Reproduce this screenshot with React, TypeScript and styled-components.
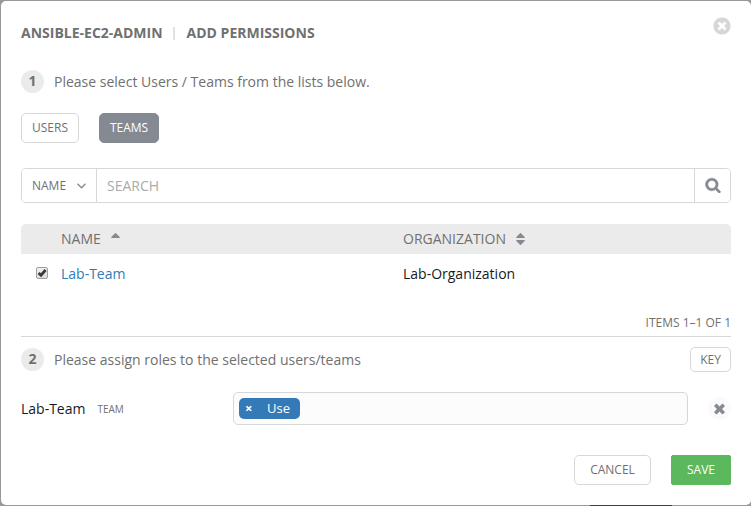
import React from "react";
import styled, { createGlobalStyle } from "styled-components";

const GlobalStyle = createGlobalStyle`
  *, *::before, *::after { box-sizing: border-box; }
  html, body { margin: 0; padding: 0; overflow: hidden; }
  body { background: #999; font-family: "Open Sans", sans-serif; font-size: 14px; line-height: 20px; color: #161b1f; }
  button, input { font-family: inherit; margin: 0; }
`;

const Backdrop = styled.div`
  width: 751px;
  height: 506px;
  padding: 1px 0 1px 1px;
  background: linear-gradient(#184a71, #184a71) 590px 505px / 82px 1px no-repeat #999;
`;

const Dialog = styled.section`
  height: 504px;
  padding: 0 20px;
  background: #fff;
  border-radius: 5px;
  display: flex;
  flex-direction: column;
`;

const Header = styled.header`
  display: flex;
  justify-content: space-between;
  height: 69px;
`;

const Title = styled.h1`
  display: flex;
  align-items: center;
  height: 20px;
  margin: 22px 0 0;
  font-size: 14px;
  font-weight: 700;
  color: #707070;
  white-space: nowrap;
`;

const TitleDivider = styled.span`
  width: 2px;
  height: 13px;
  margin: 0 12px 0 10px;
  background: #e2e2e2;
`;

const CloseButton = styled.button`
  display: flex;
  width: 20px;
  height: 20px;
  margin: 15px -1px 0 0;
  padding: 0;
  border: 0;
  background: none;
  color: #d7d7d7;
`;

const StepRow = styled.div<{ $height: number }>`
  display: flex;
  align-items: center;
  height: ${(p) => p.$height}px;
  color: #707070;
`;

const StepNumber = styled.span`
  width: 23px;
  height: 23px;
  margin-right: 10px;
  border-radius: 50%;
  background: #ebebeb;
  font-weight: 700;
  line-height: 22px;
  text-align: center;
`;

const StepText = styled.span`
  flex: 1;
  padding-top: 1px;
`;

const Button = styled.button<{ $width: number; $height?: number; $tone?: "active" | "success" }>`
  width: ${(p) => p.$width}px;
  height: ${(p) => p.$height ?? 30}px;
  padding: 0 0 1px;
  border: 1px solid
    ${(p) => (p.$tone === "active" ? "#848992" : p.$tone === "success" ? "#5cb85c" : "#d7d7d7")};
  border-radius: ${(p) => (p.$tone === "success" ? 2 : 5)}px;
  background: ${(p) => (p.$tone === "active" ? "#848992" : p.$tone === "success" ? "#5cb85c" : "#fff")};
  color: ${(p) => (p.$tone ? "#fff" : "#707070")};
  font-size: 12px;
  line-height: 17px;
  text-align: center;
`;

const Tabs = styled.nav`
  display: flex;
  gap: 20px;
  margin-top: 20px;
`;

const SearchBar = styled.div`
  display: flex;
  height: 35px;
  margin-top: 25px;
  border: 1px solid #d7d7d7;
  border-radius: 5px;
  overflow: hidden;
`;

const SearchKey = styled.button`
  display: flex;
  align-items: center;
  justify-content: space-between;
  width: 75px;
  padding: 0 10px;
  border: 0;
  border-right: 1px solid #d7d7d7;
  background: #fff;
  color: #707070;
  font-size: 12px;
`;

const SearchInput = styled.input`
  flex: 1;
  min-width: 0;
  padding: 0 10px 1px;
  border: 0;
  outline: 0;
  background: #fff;
  font-size: 14px;
  &::placeholder { color: #aaa; opacity: 1; }
`;

const SearchButton = styled.button`
  display: flex;
  align-items: center;
  justify-content: center;
  width: 36px;
  padding: 0 0 1px;
  border: 0;
  border-left: 1px solid #d7d7d7;
  background: #fff;
  color: #848992;
`;

const TableRow = styled.div<{ $head?: boolean }>`
  display: grid;
  grid-template-columns: 40px 342px 1fr;
  align-items: center;
  height: ${(p) => (p.$head ? 30 : 40)}px;
  margin-top: ${(p) => (p.$head ? 21 : 0)}px;
  border-radius: ${(p) => (p.$head ? "5px 5px 0 0" : "0")};
  background: ${(p) => (p.$head ? "#ebebeb" : "#fff")};
  color: ${(p) => (p.$head ? "#707070" : "#161b1f")};
`;

const HeadCell = styled.div`
  display: flex;
  align-items: center;
  gap: 10px;
  svg { color: #848992; }
`;

const TeamLink = styled.a`
  color: #337ab7;
  text-decoration: none;
`;

const CheckBox = styled.span`
  display: flex;
  width: 12px;
  height: 12px;
  margin: -2px 0 0 15px;
  border: 1px solid #a0a0a0;
  border-radius: 2px;
  background: linear-gradient(#efefef, #dedede);
  color: #3a3a3a;
  svg { overflow: visible; }
`;

const ItemCount = styled.div`
  height: 43px;
  padding-top: 19px;
  border-bottom: 1px solid #d7d7d7;
  color: #707070;
  font-size: 12px;
  text-align: right;
`;

const AssignStep = styled.div`
  margin-top: 10px;
`;

const RoleRow = styled.div`
  display: flex;
  align-items: center;
  height: 33px;
  margin-top: 20px;
`;

const RoleOwner = styled.div`
  display: flex;
  align-items: center;
  gap: 12px;
  width: 212px;
`;

const OwnerType = styled.span`
  color: #707070;
  font-size: 10px;
`;

const RoleField = styled.div`
  display: flex;
  align-items: center;
  width: 455px;
  height: 33px;
  margin-right: 20px;
  padding: 0 5px;
  border: 1px solid #d7d7d7;
  border-radius: 5px;
  background: #fcfcfc;
`;

const RoleTag = styled.span`
  display: flex;
  align-items: center;
  width: 61px;
  height: 21px;
  padding: 0 0 2px 6px;
  border-radius: 5px;
  background: #337ab7;
  color: #fff;
  font-size: 13px;
`;

const TagRemove = styled.b`
  width: 22px;
  padding-top: 1px;
  font-size: 13px;
`;

const RemoveButton = styled.button`
  display: flex;
  align-items: center;
  justify-content: center;
  width: 23px;
  height: 23px;
  padding: 0;
  border: 0;
  border-radius: 50%;
  background: #fafafa;
  color: #848992;
`;

const Footer = styled.footer`
  display: flex;
  justify-content: flex-end;
  gap: 20px;
  margin-top: 30px;
`;

const glyphs = {
  search:
    "M1216 832q0-185-131.5-316.5t-316.5-131.5-316.5 131.5-131.5 316.5 131.5 316.5 316.5 131.5 316.5-131.5 131.5-316.5zm512 832q0 52-38 90t-90 38q-54 0-90-38l-343-342q-179 124-399 124-143 0-273.5-55.5t-225-150-150-225-55.5-273.5 55.5-273.5 150-225 225-150 273.5-55.5 273.5 55.5 225 150 150 225 55.5 273.5q0 220-124 399l343 343q37 37 37 90z",
  times:
    "M1490 1322q0 40-28 68l-136 136q-28 28-68 28t-68-28l-294-294-294 294q-28 28-68 28t-68-28l-136-136q-28-28-28-68t28-68l294-294-294-294q-28-28-28-68t28-68l136-136q28-28 68-28t68 28l294 294 294-294q28-28 68-28t68 28l136 136q28 28 28 68t-28 68l-294 294 294 294q28 28 28 68z",
  timesCircle:
    "M1277 1122q0-26-19-45l-181-181 181-181q19-19 19-45 0-27-19-46l-90-90q-19-19-46-19-26 0-45 19l-181 181-181-181q-19-19-45-19-27 0-46 19l-90 90q-19 19-19 46 0 26 19 45l181 181-181 181q-19 19-19 45 0 27 19 46l90 90q19 19 46 19 26 0 45-19l181-181 181 181q19 19 45 19 27 0 46-19l90-90q19-19 19-46zm387-226q0 209-103 385.5t-279.5 279.5-385.5 103-385.5-103-279.5-279.5-103-385.5 103-385.5 279.5-279.5 385.5-103 385.5 103 279.5 279.5 103 385.5z",
};

function Glyph({ name, size, weight = 0 }: { name: keyof typeof glyphs; size: number; weight?: number }) {
  return (
    <svg
      width={size}
      height={size}
      viewBox="0 0 1792 1792"
      fill="currentColor"
      stroke="currentColor"
      strokeWidth={weight}
      aria-hidden="true"
    >
      <path d={glyphs[name]} />
    </svg>
  );
}

function SortIcon({ ascending }: { ascending?: boolean }) {
  return (
    <svg width="9" height="12" viewBox="0 0 9 12" fill="currentColor" aria-hidden="true">
      <path d="M4.1.2a.6.6 0 0 1 .8 0l3.8 3.9c.4.4.1.9-.4.9H.7c-.5 0-.8-.5-.4-.9z" />
      {!ascending && <path d="M4.1 11.8a.6.6 0 0 0 .8 0l3.8-3.9c.4-.4.1-.9-.4-.9H.7c-.5 0-.8.5-.4.9z" />}
    </svg>
  );
}

export default function App() {
  return (
    <>
      <GlobalStyle />
      <Backdrop>
        <Dialog role="dialog" aria-label="Add permissions">
          <Header>
            <Title>
              ANSIBLE-EC2-ADMIN
              <TitleDivider />
              ADD PERMISSIONS
            </Title>
            <CloseButton aria-label="Close">
              <Glyph name="timesCircle" size={20} />
            </CloseButton>
          </Header>

          <StepRow $height={23}>
            <StepNumber>1</StepNumber>
            <StepText>Please select Users / Teams from the lists below.</StepText>
          </StepRow>

          <Tabs>
            <Button $width={58}>USERS</Button>
            <Button $width={60} $tone="active">TEAMS</Button>
          </Tabs>

          <SearchBar>
            <SearchKey>
              NAME
              <svg width="9" height="6" viewBox="0 0 9 6" fill="none" stroke="#848992" strokeWidth="1.3" aria-hidden="true">
                <path d="M.5.7 4.5 4.8 8.5.7" />
              </svg>
            </SearchKey>
            <SearchInput placeholder="SEARCH" />
            <SearchButton aria-label="Search">
              <Glyph name="search" size={16} weight={60} />
            </SearchButton>
          </SearchBar>

          <TableRow $head>
            <span />
            <HeadCell>NAME <SortIcon ascending /></HeadCell>
            <HeadCell>ORGANIZATION <SortIcon /></HeadCell>
          </TableRow>
          <TableRow>
            <CheckBox role="checkbox" aria-checked="true">
              <svg width="10" height="10" viewBox="0 0 10 10" fill="none" stroke="currentColor" strokeWidth="2.8" aria-hidden="true">
                <path d="M1.6 5 4 7.2 8.6 2" />
              </svg>
            </CheckBox>
            <TeamLink>Lab-Team</TeamLink>
            <span>Lab-Organization</span>
          </TableRow>
          <ItemCount>ITEMS 1–1 OF 1</ItemCount>

          <AssignStep>
            <StepRow $height={25}>
              <StepNumber>2</StepNumber>
              <StepText>Please assign roles to the selected users/teams</StepText>
              <Button $width={41} $height={25}>KEY</Button>
            </StepRow>
            <RoleRow>
              <RoleOwner>
                Lab-Team
                <OwnerType>TEAM</OwnerType>
              </RoleOwner>
              <RoleField>
                <RoleTag>
                  <TagRemove>×</TagRemove>
                  Use
                </RoleTag>
              </RoleField>
              <RemoveButton aria-label="Remove">
                <Glyph name="times" size={15} weight={60} />
              </RemoveButton>
            </RoleRow>
          </AssignStep>

          <Footer>
            <Button $width={77}>CANCEL</Button>
            <Button $width={60} $tone="success">SAVE</Button>
          </Footer>
        </Dialog>
      </Backdrop>
    </>
  );
}
